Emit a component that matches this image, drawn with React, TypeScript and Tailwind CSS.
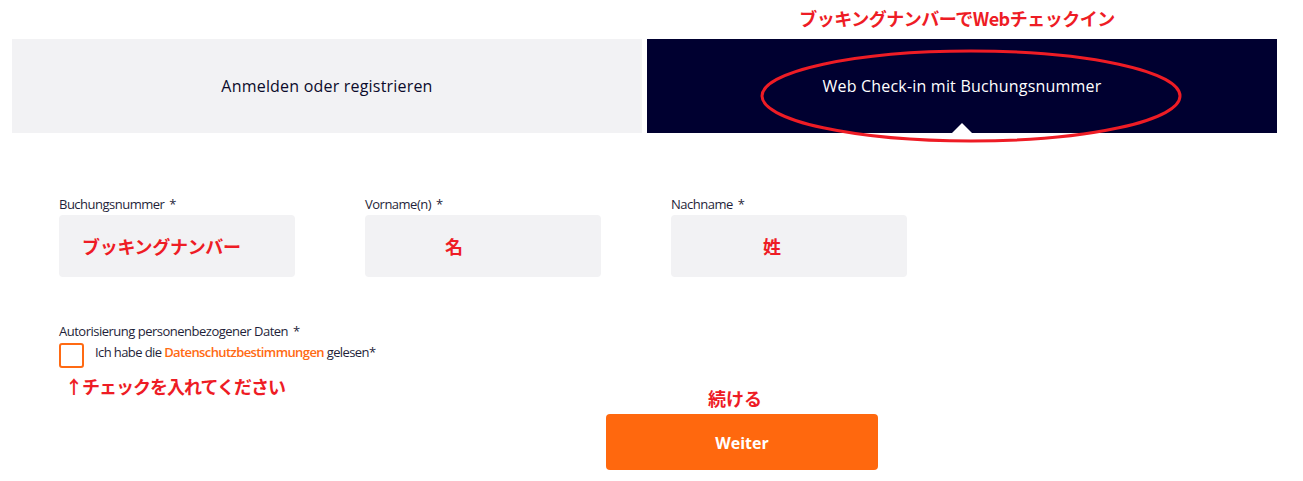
import React from "react";

const jp = "font-['Noto_Sans_CJK_JP',sans-serif] font-bold text-[#ee1c25]";

function Field({ label, note, noteClass }: { label: string; note: string; noteClass: string }) {
  return (
    <div className="flex flex-col">
      <div className="text-[13px] leading-[18px] tracking-[-0.5px] text-[#1f1f3a] mb-[2px]">
        {label} <span className="ml-[2px]">*</span>
      </div>
      <div className="h-[62px] w-[236px] rounded-[4px] bg-[#f2f2f4] flex items-center">
        <span className={`${jp} text-[18px] leading-[24px] ${noteClass}`}>{note}</span>
      </div>
    </div>
  );
}

export default function App() {
  return (
    <div className="relative w-[1303px] h-[481px] bg-white font-['Open_Sans',sans-serif] overflow-hidden">
      {/* top annotation */}
      <div className="ml-[12px] w-[1265px] h-[39px] grid grid-cols-2 gap-[5px]">
        <div />
        <div className="flex justify-center pt-[6px]">
          <span className={`${jp} text-[18px] leading-[24px] tracking-[-0.5px] pr-[10px]`}>
            ブッキングナンバーでWebチェックイン
          </span>
        </div>
      </div>

      {/* tabs */}
      <div className="ml-[12px] w-[1265px] flex gap-[5px]">
        <div className="w-[630px] h-[94px] bg-[#f2f2f4] flex items-center justify-center">
          <span className="text-[16px] font-medium tracking-[0.2px] text-[#0b0b2b]">Anmelden oder registrieren</span>
        </div>
        <div className="relative w-[630px] h-[94px] bg-[#000030] flex items-center justify-center">
          <span className="text-[16px] font-medium tracking-[0.2px] text-white">Web Check-in mit Buchungsnummer</span>
          <div className="absolute bottom-0 left-[305px] w-0 h-0 border-l-[10px] border-r-[10px] border-b-[10px] border-l-transparent border-r-transparent border-b-white" />
        </div>
      </div>

      {/* ellipse annotation */}
      <svg className="absolute left-[760px] top-[49px]" width="424" height="96" viewBox="0 0 424 96">
        <ellipse cx="211" cy="47" rx="209" ry="45" fill="none" stroke="#ee1c25" strokeWidth="3" />
      </svg>

      {/* form */}
      <div className="ml-[59px] mt-[62px]">
        <div className="flex gap-[70px]">
          <Field label="Buchungsnummer" note="ブッキングナンバー" noteClass="pl-[23px] tracking-[-0.3px]" />
          <Field label="Vorname(n)" note="名" noteClass="pl-[80px]" />
          <Field label="Nachname" note="姓" noteClass="pl-[92px]" />
        </div>

        <div className="mt-[45px] text-[13px] leading-[18px] tracking-[-0.5px] text-[#1f1f3a]">
          Autorisierung personenbezogener Daten <span className="ml-[2px]">*</span>
        </div>
        <div className="mt-[3px] flex items-start">
          <div className="w-[25px] h-[25px] rounded-[3px] border-2 border-[#ff6a13] bg-white" />
          <div className="ml-[11px] text-[13px] leading-[18px] tracking-[-0.6px] text-[#1f1f3a]">
            Ich habe die <span className="text-[#ff6a13] font-semibold">Datenschutzbestimmungen</span> gelesen*
          </div>
        </div>

        <div className="flex">
          <div className="w-[547px]">
            <div className={`${jp} mt-[6px] ml-[6px] text-[18px] leading-[24px] tracking-[-1px]`}>↑チェックを入れてください</div>
          </div>
          <div className="flex flex-col">
            <div className={`${jp} mt-[18px] text-[18px] leading-[24px] text-center pr-[14px]`}>続ける</div>
            <div className="mt-[4px] w-[272px] h-[56px] rounded-[4px] bg-[#ff680e] flex items-center justify-center">
              <span className="text-white text-[16px] font-bold pt-[2px]">Weiter</span>
            </div>
          </div>
        </div>
      </div>
    </div>
  );
}
